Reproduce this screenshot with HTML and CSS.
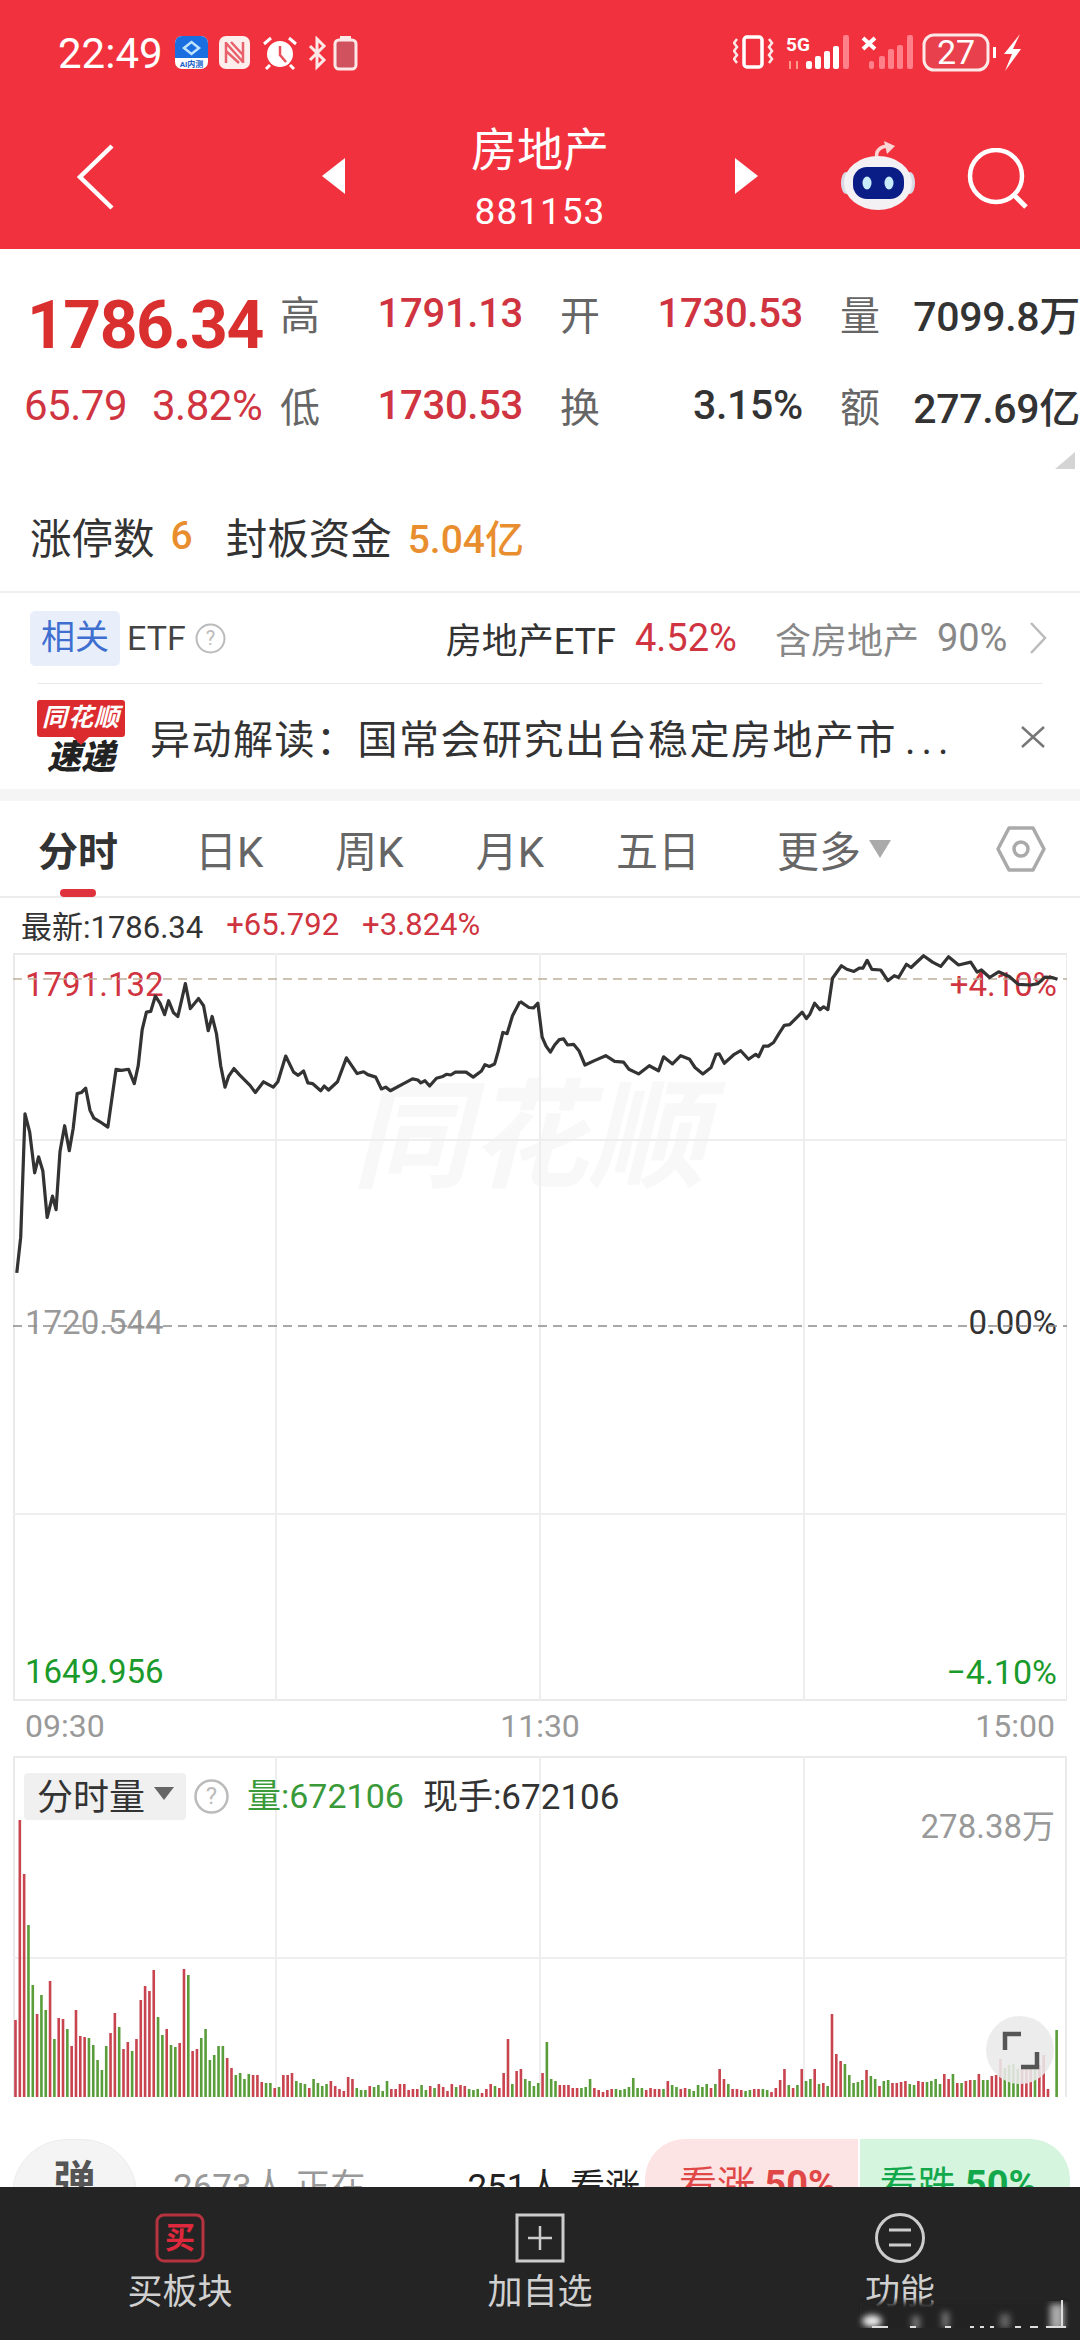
FILE: index.html
```html
<!DOCTYPE html>
<html>
  <head>
    <meta charset="UTF-8">
    <title>房地产 881153</title>
    <link rel="stylesheet" href="styles.css">
  </head>
  <body>
    <header class="header">
      <div class="status">
        <span class="clock">22:49</span>
        <svg class="status-left" width="190" height="36" viewBox="0 0 190 36">
          <rect x="0" y="0" width="33" height="33" rx="7" fill="#fff"/>
          <path d="M0 22V7a7 7 0 0 1 7-7h19a7 7 0 0 1 7 7v15z" fill="#1a6fe0"/>
          <path d="M9 12l7.500-6 7.500 6-7.500 6z" fill="none" stroke="#bfe4ff" stroke-width="2.500"/>
          <text x="16.500" y="31" class="ai-text">AI内测</text>
          <rect x="44" y="0" width="31" height="33" rx="7" fill="#fdeeee"/>
          <path d="M51 6v21M68 6v21M51 7l17 19M51 15l13 12M56 6l12 13" stroke="#e8606a" stroke-width="2.500" fill="none"/>
          <circle cx="105" cy="18" r="13" fill="#fff"/>
          <path d="M105 10v9l6 7" stroke="#e8505a" stroke-width="2.500" fill="none"/>
          <path d="M89 8l7-6M121 8l-7-6M95 29l-4 4M115 29l4 4" stroke="#fff" stroke-width="3" fill="none"/>
          <path d="M135 10l14 14-7 7V3l7 7-14 14" stroke="#fde8e8" stroke-width="3" fill="none"/>
          <rect x="160" y="4" width="21" height="29" rx="4" fill="#d0525e" stroke="#fde8e8" stroke-width="3"/>
          <rect x="165" y="-1" width="11" height="4" fill="#fde8e8"/>
        </svg>
        <svg class="status-right" width="292" height="40" viewBox="0 0 292 40">
          <rect x="11" y="4" width="18" height="30" rx="3" fill="none" stroke="#fff" stroke-width="3.500"/>
          <path d="M4 6l-3 4 3 4-3 4 3 4-3 4 3 4M36 6l3 4-3 4 3 4-3 4 3 4-3 4" fill="none" stroke="#fde8e8" stroke-width="2.500"/>
          <text x="53" y="18" class="net-text">5G</text>
          <path d="M57 28v8M64 28v8" stroke="#f98" stroke-width="2"/>
          <g fill="#fff">
            <rect x="73" y="28" width="6" height="8" rx="2"/>
            <rect x="82" y="23" width="6" height="13" rx="2"/>
            <rect x="91" y="18" width="6" height="18" rx="2"/>
            <rect x="100" y="13" width="6" height="23" rx="2"/>
          </g>
          <rect x="110" y="2" width="6" height="34" rx="2" fill="#ff8088"/>
          <path d="M130 5l12 11M142 5l-12 11" stroke="#fff" stroke-width="4"/>
          <g fill="#ff8088">
            <rect x="136" y="28" width="5" height="8" rx="2"/>
            <rect x="146" y="23" width="6" height="13" rx="2"/>
            <rect x="155" y="16" width="6" height="20" rx="2"/>
            <rect x="164" y="12" width="6" height="24" rx="2"/>
            <rect x="174" y="2" width="6" height="34" rx="2"/>
          </g>
          <rect x="191" y="2" width="64" height="35" rx="10" fill="#e0505c" fill-opacity=".5" stroke="#fde8e8" stroke-width="3"/>
          <text x="223" y="31" class="batt-text">27</text>
          <rect x="260" y="14" width="3" height="11" fill="#fff"/>
          <path d="M287 1l-16 20h8l-7 17 16-22h-8z" fill="#fff"/>
        </svg>
      </div>
      <div class="titlebar">
        <svg class="back" width="38" height="66" viewBox="0 0 38 66"><path d="M35 2L3 33l32 31" fill="none" stroke="#fff" stroke-width="4.500"/></svg>
        <svg class="arrow" width="23" height="36" viewBox="0 0 23 36"><path d="M23 0v36L0 18z" fill="#fff"/></svg>
        <div class="title">
          <div class="title-name">房地产</div>
          <div class="title-code">881153</div>
        </div>
        <svg class="arrow" width="23" height="36" viewBox="0 0 23 36"><path d="M0 0v36l23-18z" fill="#fff"/></svg>
        <svg class="robot" width="76" height="70" viewBox="0 0 76 70">
          <path d="M37 18c-2-8 3-13 12-13" fill="none" stroke="#fbd5d5" stroke-width="3.500"/>
          <path d="M44 0l11 5-8 8z" fill="#fbd5d5"/>
          <ellipse cx="6" cy="42" rx="5" ry="11" fill="#d8dbe6"/>
          <ellipse cx="70" cy="42" rx="5" ry="11" fill="#d8dbe6"/>
          <ellipse cx="38" cy="42" rx="34" ry="27" fill="#f3f1f4"/>
          <rect x="13" y="26" width="51" height="32" rx="14" fill="#0a1c86"/>
          <ellipse cx="27" cy="42" rx="4.500" ry="6.500" fill="#c8ecfb"/>
          <ellipse cx="49" cy="42" rx="4.500" ry="6.500" fill="#c8ecfb"/>
        </svg>
        <svg class="search" width="62" height="62" viewBox="0 0 62 62"><circle cx="29" cy="28" r="26" fill="none" stroke="#fff" stroke-width="4.500"/><path d="M47 47l12 12" stroke="#fff" stroke-width="5"/></svg>
      </div>
    </header>

    <section class="quote">
      <div class="quote-grid">
        <div class="price">1786.34</div>
        <div class="label">高</div>
        <div class="val red">1791.13</div>
        <div class="label">开</div>
        <div class="val red">1730.53</div>
        <div class="label">量</div>
        <div class="val dark">7099.8万</div>
        <div class="change"><span>65.79</span><span>3.82%</span></div>
        <div class="label">低</div>
        <div class="val red">1730.53</div>
        <div class="label">换</div>
        <div class="val dark">3.15%</div>
        <div class="label">额</div>
        <div class="val dark">277.69亿</div>
      </div>
      <div class="fold"><svg width="20" height="17" viewBox="0 0 20 17"><path d="M20 0v17H0z" fill="#d4d4d4"/></svg></div>
      <div class="limit">
        <span>涨停数</span><b class="orange">6</b>
        <span class="limit-gap">封板资金</span><b class="orange">5.04亿</b>
      </div>
    </section>

    <section class="etf">
      <span class="etf-tag">相关</span>
      <span class="etf-name">ETF</span>
      <svg class="help" width="31" height="31" viewBox="0 0 31 31"><circle cx="15.500" cy="15.500" r="14" fill="none" stroke="#bbb" stroke-width="2"/><text x="15.500" y="22" class="help-text">?</text></svg>
      <span class="etf-fund">房地产ETF</span>
      <span class="etf-pct">4.52%</span>
      <span class="etf-hold">含房地产</span>
      <span class="etf-ratio">90%</span>
      <svg class="more" width="18" height="32" viewBox="0 0 18 32"><path d="M2 1l14 15L2 31" fill="none" stroke="#bbb" stroke-width="2.500"/></svg>
    </section>
    <div class="rule"></div>
    <section class="news">
      <div class="news-logo">
        <div class="news-bubble">同花顺</div>
        <div class="news-brand">速递</div>
      </div>
      <div class="news-text">异动解读：国常会研究出台稳定房地产市<span class="dots">...</span></div>
      <svg class="news-close" width="26" height="22" viewBox="0 0 26 22"><path d="M2 1l22 20M24 1L2 21" stroke="#777" stroke-width="2.500"/></svg>
    </section>
    <div class="gap"></div>

    <nav class="tabs">
      <span class="tab active">分时</span>
      <span class="tab">日K</span>
      <span class="tab">周K</span>
      <span class="tab">月K</span>
      <span class="tab">五日</span>
      <span class="tab tab-more">更多<svg width="22" height="18" viewBox="0 0 22 18"><path d="M0 0h22L11 18z" fill="#aaa"/></svg></span>
      <svg class="hex" width="50" height="46" viewBox="0 0 50 46"><path d="M13 2h24l11 21-11 21H13L2 23z" fill="none" stroke="#aaa" stroke-width="3.500" stroke-linejoin="round"/><circle cx="25" cy="23" r="7" fill="none" stroke="#aaa" stroke-width="3.500"/></svg>
    </nav>
    <div class="latest">
      <span>最新:1786.34</span>
      <span class="red">+65.792</span>
      <span class="red">+3.824%</span>
    </div>

    <section class="chart">
      <div class="mark">同花顺</div>
      <span class="axis top-l red">1791.132</span>
      <span class="axis top-r red">+4.10%</span>
      <span class="axis mid-l grey">1720.544</span>
      <span class="axis mid-r dark">0.00%</span>
      <span class="axis low-l green">1649.956</span>
      <span class="axis low-r green">−4.10%</span>
      <svg class="plot" width="1054" height="748" viewBox="0 0 1054 748">
        <rect x="1" y="1" width="1053" height="746" fill="none" stroke="#eaeaea" stroke-width="2"/>
        <path d="M263 0v747M527 0v747M791 0v747M0 187h1054M0 561h1054" stroke="#eeeeee" stroke-width="2" fill="none"/>
        <path d="M0 26h1054" stroke="#bdb09a" stroke-width="1.500" stroke-dasharray="9 6"/>
        <path d="M0 373h1054" stroke="#8c8c8c" stroke-width="1.500" stroke-dasharray="9 6"/>
        <g transform="translate(-13 -173) scale(.35714)">
          <polyline class="trend" points="47,1380 58,1280 70,935 83,985 97,1100 108,1055 120,1095 132,1225 147,1165 157,1203 168,1040 181,968 194,1038 205,975 216,878 228,875 240,863 252,925 263,947 280,957 302,972 315,880 325,810 340,813 360,810 376,850 387,800 398,700 410,650 422,648 435,605 448,625 461,657 472,618 486,652 498,662 510,610 519,570 533,640 556,612 570,632 583,702 594,662 606,710 618,800 630,860 640,830 655,808 670,825 700,855 715,875 738,845 765,860 778,845 800,773 822,818 835,827 850,815 862,848 875,850 898,870 908,857 920,868 945,845 970,778 1000,822 1018,817 1030,825 1052,832 1068,865 1080,860 1093,870 1130,850 1155,837 1170,840 1178,848 1190,842 1203,857 1222,835 1240,830 1250,824 1262,826 1275,818 1305,818 1325,832 1348,815 1358,797 1370,802 1385,795 1395,760 1408,707 1420,710 1435,660 1456,620"/>
        </g>
        <g transform="translate(507 -173) scale(.35714)">
          <polyline class="trend" points="0,620 25,637 38,638 50,625 62,720 73,745 85,762 97,742 110,727 122,725 133,742 150,740 165,758 182,798 210,785 240,772 265,788 290,790 305,810 332,823 362,800 388,814 402,775 427,795 450,772 475,782 490,805 512,823 535,805 549,768 558,767 572,793 600,768 618,758 640,782 660,768 668,775 682,745 695,745 710,735 725,710 740,687 755,685 790,650 802,668 812,655 825,625 840,643 850,635 862,643 875,555 900,520 915,530 935,536 950,527 960,527 972,505 985,530 1010,532 1030,562 1048,548 1060,553 1082,516 1095,525 1130,492 1155,510 1178,522 1200,495 1228,518 1262,510 1280,538 1292,532 1315,553 1340,537 1370,550 1395,572 1430,574 1450,570 1470,552 1490,553 1505,558"/>
        </g>
      </svg>
    </section>
    <div class="times">
      <span>09:30</span>
      <span>11:30</span>
      <span>15:00</span>
    </div>

    <section class="volume">
      <svg id="vol-plot" class="plot" width="1054" height="343" viewBox="0 0 1054 343">
        <path d="M1 341V1h1052v340" fill="none" stroke="#eaeaea" stroke-width="2"/>
        <path d="M263 0v341M527 0v341M791 0v341M0 202h1054" stroke="#eeeeee" stroke-width="2" fill="none"/>
      </svg>
      <div class="vol-head">
        <span class="vol-select">分时量<svg width="20" height="13" viewBox="0 0 20 13"><path d="M0 0h20L10 13z" fill="#666"/></svg></span>
        <svg class="help" width="35" height="35" viewBox="0 0 35 35"><circle cx="17.500" cy="17.500" r="16" fill="none" stroke="#bbb" stroke-width="2.500"/><text x="17.500" y="25" class="help-text big">?</text></svg>
        <span class="vol-now green">量:672106</span>
        <span class="vol-hand">现手:672106</span>
      </div>
      <span class="vol-max">278.38万</span>
      <div class="expand"><svg width="68" height="68" viewBox="0 0 68 68"><path d="M19 34V18h16M51 36v15H35" fill="none" stroke="#555" stroke-width="4.500"/></svg></div>
    </section>

    <section class="social">
      <div class="danmu">弹</div>
      <span class="online">2673人 正在</span>
      <span class="rise-count">251人 看涨</span>
      <div class="vote">
        <div class="vote-up">看涨 <b>50%</b></div>
        <div class="vote-down">看跌 <b>50%</b></div>
      </div>
    </section>

    <footer class="bottom">
      <div class="bottom-item">
        <svg width="50" height="50" viewBox="0 0 50 50"><rect x="2" y="2" width="46" height="46" rx="7" fill="none" stroke="#b5333e" stroke-width="3"/></svg>
        <span class="buy-char">买</span>
        <span>买板块</span>
      </div>
      <div class="bottom-item">
        <svg width="50" height="50" viewBox="0 0 50 50"><rect x="2" y="2" width="46" height="46" fill="none" stroke="#ccc" stroke-width="3"/><path d="M25 13v24M13 25h24" stroke="#ccc" stroke-width="2.500"/></svg>
        <span>加自选</span>
      </div>
      <div class="bottom-item">
        <svg width="50" height="50" viewBox="0 0 50 50"><circle cx="25" cy="25" r="23.500" fill="none" stroke="#ccc" stroke-width="3"/><path d="M14 17h22M14 32h22" stroke="#ccc" stroke-width="3"/></svg>
        <span>功能</span>
      </div>
      <svg class="stamp" width="230" height="38" viewBox="0 0 230 38">
        <defs><filter id="soft"><feGaussianBlur stdDeviation="3"/></filter></defs>
        <rect x="14" y="12" width="200" height="34" fill="#242424" filter="url(#soft)"/>
        <g filter="url(#soft)" fill="#bbb">
          <ellipse cx="22" cy="31" rx="10" ry="6" fill="#eee"/>
          <rect x="62" y="26" width="8" height="14" fill="#777"/>
          <rect x="92" y="22" width="7" height="16" fill="#777"/>
          <rect x="150" y="24" width="10" height="14" fill="#666"/>
          <rect x="200" y="14" width="14" height="26" fill="#aaa"/>
        </g>
        <path d="M22 37h16M60 37h6M95 37h6M120 37h4M130 37h4M140 37h4M165 37h6M180 37h8M196 37h20M212 37V10" stroke="#ddd" stroke-width="2"/>
      </svg>
    </footer>
    <script src="chart.js"></script>
  </body>
</html>
```

FILE: styles.css
```css
* {
  box-sizing: border-box;
}

body {
  margin: 0;
  width: 1080px;
  height: 2340px;
  overflow: hidden;
  position: relative;
  background-color: white;
  color: #333;
  font-family: Roboto, "Noto Sans CJK SC", sans-serif;
}

svg {
  display: block;
  flex: none;
}

.red {
  color: #cf3440;
}

.green {
  color: #1a9a2a;
}

.grey {
  color: #999;
}

.dark {
  color: #333;
}

.orange {
  color: #e98e2f;
  font-weight: 500;
}

/* header */
.header {
  height: 249px;
  background-color: #f1323e;
  color: white;
}

.status {
  height: 106px;
  display: flex;
  align-items: center;
  padding-left: 58px;
}

.clock {
  width: 117px;
  font-size: 42px;
}

.status-left {
  margin-top: 1px;
}

.status-right {
  margin-left: 368px;
}

.ai-text {
  font-size: 8px;
  font-weight: 700;
  fill: #1a5fc8;
  text-anchor: middle;
}

.net-text {
  font-size: 19px;
  font-weight: 700;
  fill: #fff;
}

.batt-text {
  font-size: 34px;
  fill: #fff;
  text-anchor: middle;
}

.titlebar {
  height: 143px;
  display: flex;
  align-items: center;
  padding-left: 77px;
}

.arrow {
  margin-top: -3px;
}

.back {
  margin-right: 207px;
  margin-top: -2px;
}

.title {
  width: 390px;
  text-align: center;
}

.title-name {
  font-size: 46px;
  line-height: 58px;
}

.title-code {
  margin-top: 11px;
  font-size: 37px;
  line-height: 44px;
  letter-spacing: 1px;
}

.robot {
  margin-left: 82px;
  margin-top: -4px;
}

.search {
  margin-left: 51px;
  margin-top: 3px;
}

/* quote block */
.quote-grid {
  display: grid;
  grid-template-columns: 256px 40px 203px 77px 203px 77px 200px;
  grid-auto-rows: 92px;
  padding: 18px 0 0 24px;
  align-items: center;
}

.price {
  align-self: start;
  margin-top: 26px;
  padding-left: 3px;
  font-size: 66px;
  line-height: 66px;
  font-weight: 700;
  letter-spacing: -1.5px;
  color: #d9302f;
}

.label {
  font-size: 40px;
  color: #666;
  text-align: right;
}

.val {
  font-size: 40px;
  font-weight: 500;
  letter-spacing: -0.3px;
  text-align: right;
}

.val.dark {
  font-size: 41px;
}

.change {
  display: flex;
  gap: 25px;
  font-size: 42px;
  letter-spacing: -0.5px;
  color: #cf3440;
}

.fold {
  display: flex;
  justify-content: flex-end;
  padding-right: 5px;
  margin-top: 1px;
}

.limit {
  height: 124px;
  padding: 12px 0 0 30px;
  display: flex;
  align-items: center;
  font-size: 41.500px;
  border-bottom: 2px solid #f0f0f0;
}

.limit b {
  margin-left: 16px;
  font-size: 39px;
}

.limit-gap {
  margin-left: 33px;
}

/* etf row */
.etf {
  height: 90px;
  display: flex;
  align-items: center;
  padding-left: 30px;
  font-size: 36px;
}

.etf-tag {
  width: 90px;
  height: 55px;
  line-height: 53px;
  border-radius: 5px;
  text-align: center;
  font-size: 34px;
  background-color: #e9effa;
  color: #3e6fd0;
}

.etf-name {
  margin-left: 7px;
  font-size: 34px;
  color: #444;
}

.etf .help {
  margin-left: 9px;
}

.help-text {
  font-size: 20px;
  fill: #bbb;
  text-anchor: middle;
}

.help-text.big {
  font-size: 24px;
}

.etf-fund {
  margin-left: 220px;
}

.etf-pct {
  margin-left: 19px;
  font-size: 38px;
  color: #cf3440;
}

.etf-hold {
  margin-left: 38px;
  color: #888;
}

.etf-ratio {
  margin-left: 18px;
  font-size: 38px;
  color: #888;
}

.more {
  margin-left: 22px;
}

.rule {
  height: 1px;
  margin: 0 38px;
  background-color: #e8e8e8;
}

/* news row */
.news {
  height: 105px;
  display: flex;
  align-items: center;
  padding-left: 37px;
}

.news-logo {
  width: 88px;
  font-style: italic;
  font-weight: 700;
  text-align: center;
}

.news-bubble {
  position: relative;
  height: 37px;
  line-height: 35px;
  border-radius: 3px;
  background-color: #dc2b2e;
  color: white;
  font-size: 25px;
  letter-spacing: 1px;
}

.news-bubble::after {
  content: "";
  position: absolute;
  left: 36px;
  bottom: -8px;
  border: 8px solid transparent;
  border-top-color: #dc2b2e;
  border-bottom-width: 0;
}

.news-brand {
  height: 33px;
  margin-top: 4px;
  line-height: 33px;
  font-size: 34px;
  font-weight: 900;
  color: #222;
}

.news-text {
  width: 800px;
  margin-left: 25px;
  font-size: 40px;
  letter-spacing: 1.500px;
  white-space: nowrap;
}

.dots {
  margin-left: 8px;
  letter-spacing: 6px;
}

.news-close {
  margin-left: 70px;
}

.gap {
  height: 12px;
  background-color: #f5f5f5;
}

/* tabs */
.tabs {
  height: 97px;
  display: flex;
  align-items: center;
  gap: 72px;
  padding-left: 38px;
  border-bottom: 2px solid #ececec;
}

.tab {
  position: relative;
  display: flex;
  align-items: center;
  align-self: stretch;
  font-size: 42px;
  color: #666;
}

.tab.active {
  margin-right: 5px;
  font-size: 40px;
  font-weight: 700;
  color: #333;
}

.tab.active::after {
  content: "";
  position: absolute;
  left: 22px;
  bottom: -1px;
  width: 36px;
  height: 8px;
  border-radius: 4px;
  background-color: #e0323c;
}

.tab-more {
  margin-left: 5px;
}

.tab-more svg {
  margin-left: 8px;
}

.hex {
  margin-left: 33px;
}

/* chart */
.latest {
  height: 55px;
  display: flex;
  align-items: center;
  gap: 23px;
  padding: 0 0 2px 21px;
  font-size: 31px;
}

.chart {
  position: relative;
  height: 748px;
  margin: 0 13px;
}

.plot {
  position: absolute;
  left: 0;
  top: 0;
}

.trend {
  fill: none;
  stroke: #333;
  stroke-width: 9;
  stroke-linejoin: round;
}

.mark {
  position: absolute;
  left: 339px;
  top: 120px;
  font-size: 118px;
  line-height: 130px;
  font-weight: 700;
  font-style: italic;
  color: #f8f8f8;
}

.axis {
  position: absolute;
  font-size: 33px;
  line-height: 36px;
}

.top-l {
  left: 12px;
  top: 14px;
}

.top-r {
  right: 10px;
  top: 14px;
}

.mid-l {
  left: 12px;
  top: 352px;
}

.mid-r {
  right: 10px;
  top: 352px;
}

.low-l {
  left: 12px;
  top: 701px;
}

.low-r {
  right: 10px;
  top: 701px;
  font-size: 34px;
}

.times {
  height: 55px;
  display: flex;
  justify-content: space-between;
  align-items: center;
  padding: 0 25px 6px;
  font-size: 32px;
  color: #999;
}

.volume {
  position: relative;
  height: 343px;
  margin: 0 13px;
}

.vol-head {
  position: relative;
  display: flex;
  align-items: center;
  padding: 12px 0 0 11px;
  font-size: 35px;
}

.vol-select {
  width: 162px;
  height: 47px;
  display: flex;
  align-items: center;
  gap: 9px;
  padding: 0 0 5px 13px;
  font-size: 36px;
  background-color: #f0f0f0;
  border-radius: 4px;
}

.vol-head .help {
  margin-left: 8px;
}

.vol-now {
  margin: 0 0 5px 18px;
  font-size: 34px;
  color: #3a9a3a;
}

.vol-hand {
  margin: 0 0 5px 19px;
}

.vol-max {
  position: absolute;
  right: 12px;
  top: 44px;
  font-size: 33px;
  color: #999;
}

.expand {
  position: absolute;
  left: 973px;
  top: 260px;
  width: 68px;
  height: 68px;
  border-radius: 50%;
  background-color: rgba(233, 233, 233, 0.88);
}

/* strip behind the bottom bar */
.social {
  height: 88px;
  overflow: hidden;
  display: flex;
  align-items: flex-start;
  padding: 40px 0 0 12px;
}

.danmu {
  width: 125px;
  height: 110px;
  border-radius: 60px;
  padding-top: 7px;
  text-align: center;
  font-size: 42px;
  font-weight: 700;
  color: #555;
  background-color: #f4f4f4;
  border: 1px solid #ececec;
}

.online {
  margin: 19px 0 0 36px;
  font-size: 35px;
  color: #999;
}

.rise-count {
  margin: 19px 0 0 102px;
  font-size: 35px;
  color: #222;
}

.vote {
  display: flex;
  gap: 2px;
  height: 100px;
  margin-left: 5px;
  border-radius: 40px;
  overflow: hidden;
  font-size: 38px;
}

.vote-up,
.vote-down {
  padding-top: 15px;
  text-align: center;
}

.vote-up {
  width: 213px;
  padding-left: 12px;
  background-color: #fde4e4;
  color: #e04848;
}

.vote-down {
  width: 210px;
  padding-right: 14px;
  background-color: #d6f5df;
  color: #14a84c;
}

/* bottom bar */
.bottom {
  position: relative;
  height: 153px;
  display: flex;
  background-color: #242424;
  color: #d0d0d0;
  font-size: 35px;
}

.bottom-item {
  position: relative;
  width: 360px;
  display: flex;
  flex-direction: column;
  align-items: center;
  padding-top: 26px;
}

.bottom-item span {
  margin-top: 8px;
  line-height: 44px;
}

.bottom-item .buy-char {
  position: absolute;
  top: 26px;
  margin: 0;
  line-height: 50px;
  font-size: 30px;
  font-weight: 700;
  color: #e0283c;
}

.stamp {
  position: absolute;
  left: 850px;
  top: 103px;
}
```

FILE: chart.js
```js
// volume bars read off the session, left to right: colour + height in px
const bars = "r77 r277 r223 g172 g112 r83 g102 g87 r116 g58 r79 r78 g68 r51 r87 r61 r60 g59 g52 g37 g27 g51 r64 r84 g70 r48 r55 g46 r58 r97 r111 r106 r127 g80 g62 r68 g52 g50 r54 r128 g122 r46 r48 g59 g68 g37 g42 g51 g51 r39 r29 g22 g24 g18 g23 r22 r22 r15 g14 g14 r9 g10 r22 r22 r24 g16 g14 g13 r9 g18 g14 g11 g13 r16 r11 r8 r6 r20 r18 g9 g7 g7 r11 g10 g12 g6 g16 r8 r8 r13 r13 r7 r8 r8 g12 g7 r11 g9 r13 r10 r6 r13 g10 r12 r11 g8 g7 g8 r4 r8 r13 g11 r9 r24 r58 g13 r26 r28 g18 g16 g11 g14 r24 g55 g18 g16 r12 r12 r12 r9 r9 g9 g10 g18 r9 r7 r5 r7 r8 g8 g7 g8 g10 g19 g9 g9 r7 r9 r8 r8 g8 r16 g12 g10 r8 r9 g8 g6 g12 g10 g13 r9 g13 r28 r18 g13 r8 r8 r7 g6 g7 r8 r8 g8 g7 r5 r9 r17 r28 g12 r9 g12 r28 g16 g18 r28 g13 r14 g11 r83 r43 r36 g33 g22 g14 g15 g17 r27 g21 g18 r11 g16 g17 r14 r14 r15 r16 g13 g12 r16 r15 g15 g16 g18 g13 r23 r18 g23 r14 g14 r16 r17 g17 r23 g17 g17 r21 r22 r38 g29 g32 g33 g28 r29 r31 r32 g29 r32 r42 r8 r0 g67".split(" ");

const plot = document.getElementById("vol-plot");
const colors = { r: "#c8444f", g: "#5a9e3c" };

bars.forEach((bar, i) => {
  const height = Number(bar.slice(1));
  const rect = document.createElementNS("http://www.w3.org/2000/svg", "rect");
  rect.setAttribute("x", 1.2 + i * 4.32);
  rect.setAttribute("y", 341 - height);
  rect.setAttribute("width", 2.6);
  rect.setAttribute("height", height);
  rect.setAttribute("fill", colors[bar[0]]);
  plot.appendChild(rect);
});
```
